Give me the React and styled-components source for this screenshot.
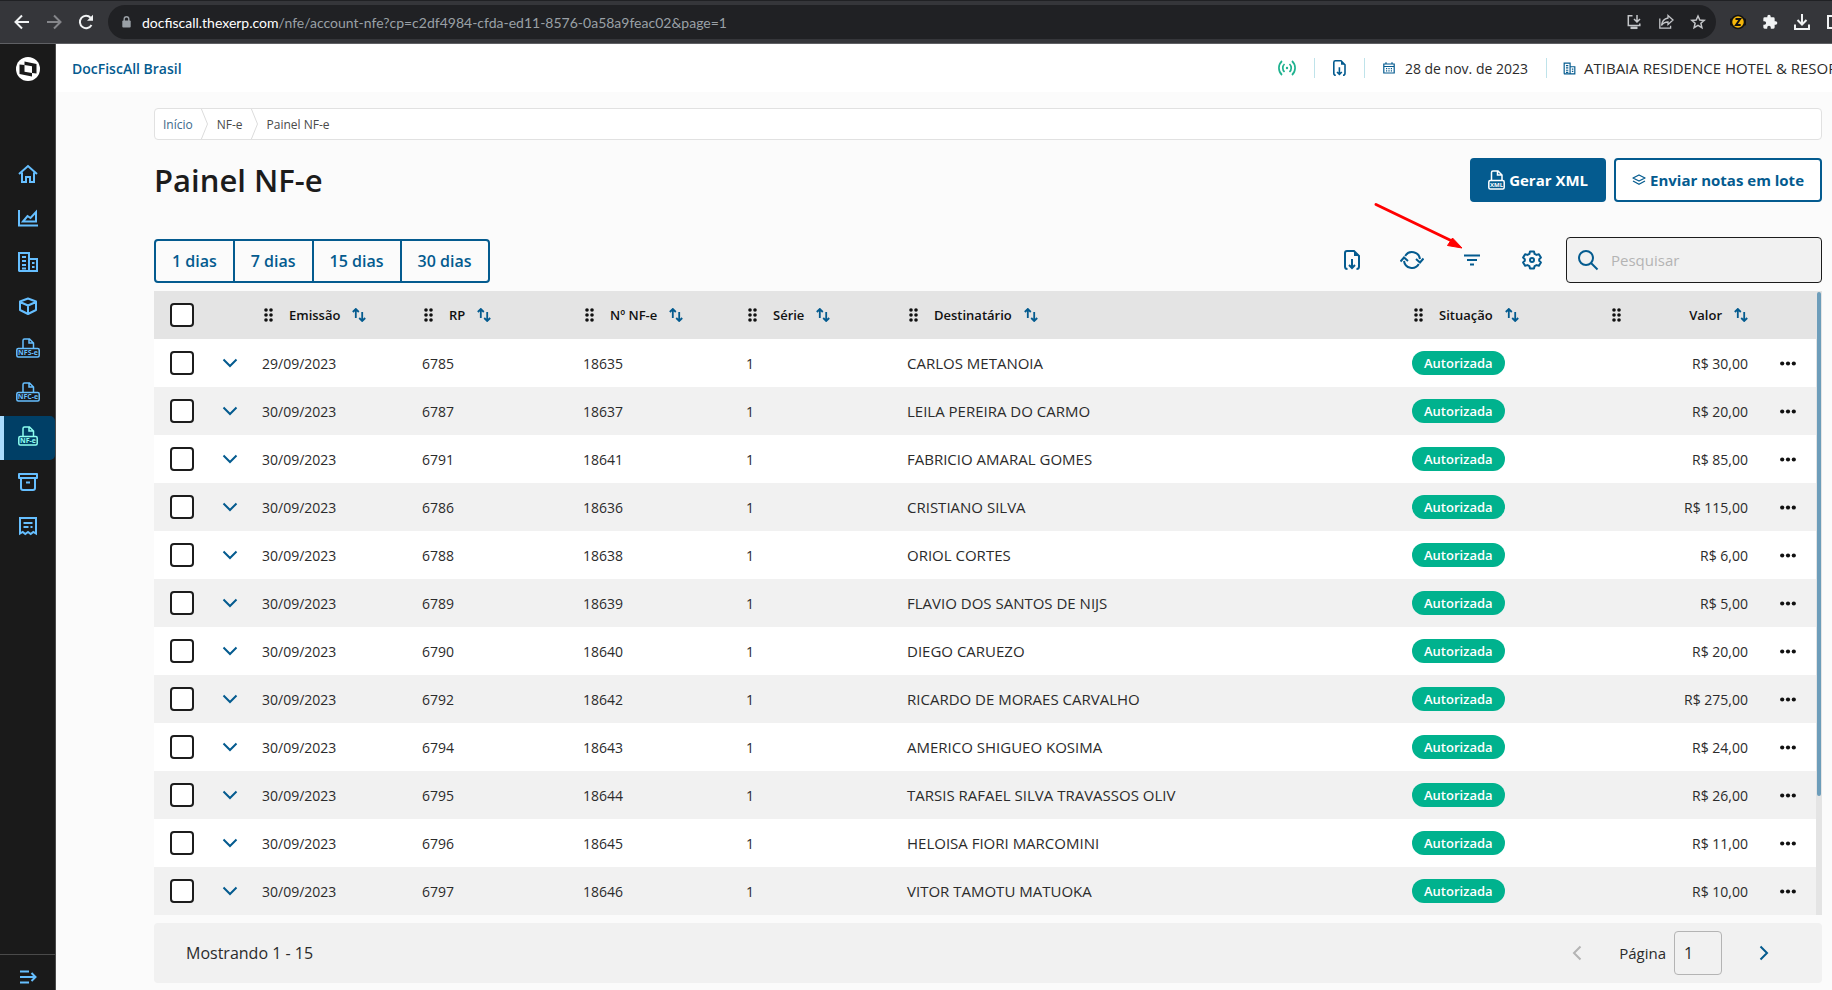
import React from "react";
import styled, { createGlobalStyle } from "styled-components";

const GlobalStyle = createGlobalStyle`
  * {
    box-sizing: border-box;
  }

  body {
    margin: 0;
    background: #fbfbfb;
    color: #2b2b2b;
    font-family: "Open Sans", "Noto Sans", sans-serif;
    font-size: 14px;
    overflow: hidden;
  }

  button, input {
    font: inherit;
    color: inherit;
  }

  a {
    color: inherit;
    text-decoration: none;
  }

  svg {
    display: block;
    flex: none;
  }
`;

/* ---------- icons ---------- */

const Icon = ({ size = 24, width, height, box = "0 0 24 24", stroke = 2, children }) => (
  <svg
    width={width || size}
    height={height || size}
    viewBox={box}
    fill="none"
    stroke="currentColor"
    strokeWidth={stroke}
    aria-hidden="true"
  >
    {children}
  </svg>
);

const BackIcon = () => (
  <Icon size={16} box="0 0 16 16">
    <path d="M15 8H2M8 1.5 1.5 8 8 14.5" />
  </Icon>
);

const ForwardIcon = () => (
  <Icon size={16} box="0 0 16 16">
    <path d="M1 8h13M8 1.5 14.5 8 8 14.5" />
  </Icon>
);

const ReloadIcon = () => (
  <Icon size={16} box="0 0 16 16">
    <path d="M13.5 11A6.2 6.2 0 1 1 12.6 3.7" />
    <path d="M15 .8v6H9z" fill="currentColor" stroke="none" />
  </Icon>
);

const LockIcon = () => (
  <Icon width={9} height={12} box="0 0 9 12" stroke={1.4}>
    <path d="M2.2 5V3a2.3 2.3 0 0 1 4.6 0v2" />
    <rect x="0.3" y="4.6" width="8.4" height="7" rx="1" fill="currentColor" stroke="none" />
  </Icon>
);

const InstallIcon = () => (
  <Icon size={16} box="0 0 16 16" stroke={1.5}>
    <path d="M6.5 1.8H2.3v9.6h11.5V9.5M11 1v6M8 5l3 3 3-3" />
    <path d="M4.500 13.800h7" strokeWidth="2.500" />
  </Icon>
);

const ShareIcon = () => (
  <Icon size={16} box="0 0 16 16" stroke={1.3}>
    <path d="M1.8 4.5v9.7h10.8v-2.5M10 1.5 15 6l-5 4.5V8C7 8 5 9 3.5 11.5 4 7 6.5 4.6 10 4z" />
  </Icon>
);

const StarIcon = () => (
  <Icon size={16} box="0 0 16 16" stroke={1.5}>
    <path d="m8 2 1.8 4 4.4.4-3.3 2.9 1 4.3L8 11.3l-3.9 2.3 1-4.3-3.3-2.9L6.2 6z" />
  </Icon>
);

const ZBadgeIcon = () => (
  <Icon size={16} box="0 0 16 16" stroke={2}>
    <rect x="0" y="4.5" width="16" height="7" rx="1" fill="#111" stroke="none" />
    <circle cx="8" cy="8" r="6.5" fill="#f5b70a" stroke="#111" strokeWidth="1.5" />
    <path d="M5.5 5h4.600L6 11h4.700" stroke="#111" />
  </Icon>
);

const PuzzleIcon = () => (
  <Icon size={16} box="0 0 24 24" stroke={0}>
    <path
      fill="currentColor"
      d="M20.5 11H19V7a2 2 0 0 0-2-2h-4V3.5a2.5 2.5 0 0 0-5 0V5H4a2 2 0 0 0-2 2v3.8h1.5a2.7 2.7 0 0 1 0 5.4H2V20a2 2 0 0 0 2 2h3.8v-1.5a2.7 2.7 0 0 1 5.4 0V22H17a2 2 0 0 0 2-2v-4h1.5a2.5 2.5 0 0 0 0-5z"
    />
  </Icon>
);

const DownloadIcon = () => (
  <Icon size={18} box="0 0 18 18">
    <path d="M9 1v9.5M4.500 7 9 11.500 13.500 7M2 11.500V16h14v-4.500" />
  </Icon>
);

const PanelIcon = () => (
  <Icon size={14} box="0 0 14 14">
    <rect x="1" y="1" width="12" height="12" />
  </Icon>
);

const Logo = () => (
  <svg width="24" height="24" viewBox="0 0 24 24" aria-hidden="true">
    <circle cx="12" cy="12" r="12" fill="#fff" />
    <path d="M3.500 7.500 8.500 8V4.500L20.500 7v9.500l-4.500-.500v3.500L3.500 17z" fill="#1a1a1a" />
    <path d="M8.500 8 16 9.300V16l-7.500-1.300z" fill="#fff" />
  </svg>
);

const HomeIcon = () => (
  <Icon size={20} box="0 0 20 20">
    <path d="M1 10 10 2l9 8M4 8.5V18h4v-5h4v5h4V8.5" />
  </Icon>
);

const ChartIcon = () => (
  <Icon size={22} box="0 0 22 22">
    <path d="M2 3v15.5h19" />
    <path d="M6 14.5 10.500 9l3 2L19 5v9.500z" />
  </Icon>
);

const BuildingIcon = ({ size = 22 }) => (
  <Icon size={size} box="0 0 22 22">
    <path d="M2 20V2h10v18M12 8h8v12H1.5M5 6h4M5 10h4M5 14h4M5 17.5h4M15 12h2.5M15 16h2.5" />
  </Icon>
);

const BoxIcon = () => (
  <Icon size={20} box="0 0 20 20">
    <path d="m10 2.5 8 3v8.5l-8 4-8-4V5.5zM2 6l8 3.5L18 6M10 9.5V18" strokeLinejoin="round" />
  </Icon>
);

// Sheet of paper coming out of a tag that carries the document type
const DocTagIcon = ({ label, width = 24, height = 24, fontSize = 7 }) => (
  <Icon width={width} height={height} box={`0 0 ${width} ${height}`} stroke={1.5}>
    <path d={`M${width / 2 - 5} 10V2.5q0-1.5 1.5-1.5h5l4 4v5M${width / 2 + 1} 1.5V5h4`} />
    <rect x="0.8" y="10.5" width={width - 1.6} height="8.5" rx="1.5" />
    <text
      x={width / 2}
      y="17.3"
      textAnchor="middle"
      fontFamily="Open Sans, sans-serif"
      fontSize={fontSize}
      fontWeight="700"
      fill="currentColor"
      stroke="none"
    >
      {label}
    </text>
  </Icon>
);

const ArchiveIcon = () => (
  <Icon size={20} box="0 0 20 20">
    <path d="M1 2h18v4H1zM3 6v10q0 2 2 2h10q2 0 2-2V6M8 10.5h4" strokeLinejoin="round" />
  </Icon>
);

const ReceiptIcon = () => (
  <Icon size={20} box="0 0 20 20">
    <path d="M2 17.5V2h16v15.5l-2.7-1.5-2.6 2-2.7-2-2.7 2-2.6-2zM5.5 7h9M5.5 11h5M12.5 11h2" />
  </Icon>
);

const ExpandIcon = () => (
  <Icon width={18} height={14} box="0 0 18 14">
    <path d="M1 1.5h9M1 7h15M1 12.5h9M12.5 3l4 4-4 4" />
  </Icon>
);

const SignalIcon = () => (
  <Icon size={18} box="0 0 18 18" stroke={1.7}>
    <path d="M4 2a9.5 9.5 0 0 0 0 14M6.5 5a5.5 5.5 0 0 0 0 8M14 2a9.5 9.5 0 0 1 0 14M11.5 5a5.5 5.5 0 0 1 0 8" />
    <circle cx="9" cy="9" r="1.2" fill="currentColor" stroke="none" />
  </Icon>
);

const FileDownIcon = ({ height = 20 }) => (
  <Icon width={(height * 16) / 20} height={height} box="0 0 16 20">
    <path d="M3.5 19Q1 19 1 16.5V3q0-2 2-2h7l5 5v10.5Q15 19 12.5 19" />
    <path d="M10 1v5h5z" fill="currentColor" stroke="none" />
    <path d="M8 9v9M5 15l3 3 3-3" />
  </Icon>
);

const CalendarIcon = () => (
  <Icon size={12} box="0 0 12 12" stroke={1.2}>
    <path d="M.8 2h10.4v9H.8zM.8 4.5h10.4M3 .3v2M9 .3v2" />
    <path d="M3 6.7h6M3 8.8h6" strokeDasharray="1.2 1.2" />
  </Icon>
);

const LayersIcon = () => (
  <Icon width={14} height={16} box="0 0 14 16" stroke={1.3}>
    <path d="m7 3 6 3-6 3-6-3zM1 9l6 3.3L13 9" strokeLinejoin="round" />
  </Icon>
);

const RefreshIcon = () => (
  <Icon size={24}>
    <path d="M4 13A8 8 0 0 0 18.800 16M20 11A8 8 0 0 0 5.200 8" />
    <path d="M.5 13.500 4 9.500l4 3.500M16 11l4 3.500 3.500-4" />
  </Icon>
);

const FilterIcon = () => (
  <Icon width={16} height={12} box="0 0 16 12">
    <path d="M0 1.5h16M3 6h10M6 10.5h4" />
  </Icon>
);

const GearIcon = () => (
  <Icon size={20} box="0 0 20 20">
    <path
      d="M8 1.5h4l.6 2.4 1.9 1 2.4-.7 2 3.4-1.7 1.7v1.4l1.7 1.7-2 3.4-2.4-.7-1.9 1-.6 2.4H8l-.6-2.4-1.9-1-2.4.7-2-3.4 1.7-1.7V9.3L1.1 7.6l2-3.4 2.4.7 1.9-1z"
      strokeLinejoin="round"
    />
    <circle cx="10" cy="10" r="2" />
  </Icon>
);

const SearchIcon = () => (
  <Icon size={22} box="0 0 22 22">
    <circle cx="9" cy="9" r="7" />
    <path d="m14 14 6.5 6.5" />
  </Icon>
);

const ChevronIcon = () => (
  <Icon width={16} height={10} box="0 0 16 10">
    <path d="m1.5 1.5 6.5 6.5 6.5-6.5" />
  </Icon>
);

const PrevIcon = () => (
  <Icon width={10} height={16} box="0 0 10 16">
    <path d="M8.5 1.5 2 8l6.5 6.5" />
  </Icon>
);

const NextIcon = () => (
  <Icon width={10} height={16} box="0 0 10 16">
    <path d="M1.5 1.5 8 8l-6.5 6.5" />
  </Icon>
);

const GripIcon = () => (
  <Icon width={9} height={14} box="0 0 9 14" stroke={0}>
    {[2, 7, 12].map((y) => (
      <g key={y} fill="#111">
        <circle cx="2" cy={y} r="1.8" />
        <circle cx="7" cy={y} r="1.8" />
      </g>
    ))}
  </Icon>
);

const SortIcon = () => (
  <Icon width={14} height={14} box="0 0 14 14" stroke={1.8}>
    <path d="M3.8 10V1.5M.8 4l3-3 3 3M10.2 4v8.5M7.2 10l3 3 3-3" />
  </Icon>
);

const MoreIcon = () => (
  <Icon width={16} height={5} box="0 0 16 5" stroke={0}>
    <g fill="#111">
      <circle cx="2.2" cy="2.5" r="2.1" />
      <circle cx="8" cy="2.5" r="2.1" />
      <circle cx="13.8" cy="2.5" r="2.1" />
    </g>
  </Icon>
);

/* ---------- data ---------- */

const navItems = [
  { name: "Início", icon: <HomeIcon /> },
  { name: "Gráficos", icon: <ChartIcon /> },
  { name: "Empresas", icon: <BuildingIcon /> },
  { name: "Produtos", icon: <BoxIcon /> },
  { name: "Painel NFS-e", icon: <DocTagIcon label="NFS-e" /> },
  { name: "Painel NFC-e", icon: <DocTagIcon label="NFC-e" /> },
  { name: "Painel NF-e", icon: <DocTagIcon label="NF-e" width={20} />, active: true },
  { name: "Arquivo", icon: <ArchiveIcon /> },
  { name: "Recibos", icon: <ReceiptIcon /> },
];

const periods = ["1 dias", "7 dias", "15 dias", "30 dias"];

const columns = [
  { label: "Emissão", width: 160 },
  { label: "RP", width: 161 },
  { label: "Nº NF-e", width: 163 },
  { label: "Série", width: 161 },
  { label: "Destinatário" },
  { label: "Situação", width: 198 },
  { label: "Valor", width: 154, right: true },
];

const invoices = [
  ["29/09/2023", "6785", "18635", "CARLOS METANOIA", "30,00"],
  ["30/09/2023", "6787", "18637", "LEILA PEREIRA DO CARMO", "20,00"],
  ["30/09/2023", "6791", "18641", "FABRICIO AMARAL GOMES", "85,00"],
  ["30/09/2023", "6786", "18636", "CRISTIANO SILVA", "115,00"],
  ["30/09/2023", "6788", "18638", "ORIOL CORTES", "6,00"],
  ["30/09/2023", "6789", "18639", "FLAVIO DOS SANTOS DE NIJS", "5,00"],
  ["30/09/2023", "6790", "18640", "DIEGO CARUEZO", "20,00"],
  ["30/09/2023", "6792", "18642", "RICARDO DE MORAES CARVALHO", "275,00"],
  ["30/09/2023", "6794", "18643", "AMERICO SHIGUEO KOSIMA", "24,00"],
  ["30/09/2023", "6795", "18644", "TARSIS RAFAEL SILVA TRAVASSOS OLIV", "26,00"],
  ["30/09/2023", "6796", "18645", "HELOISA FIORI MARCOMINI", "11,00"],
  ["30/09/2023", "6797", "18646", "VITOR TAMOTU MATUOKA", "10,00"],
];

/* ---------- page ---------- */

const App = () => (
  <Page>
    <GlobalStyle />
    <BrowserBar>
      <BrowserGroup>
        <BrowserButton aria-label="Voltar"><BackIcon /></BrowserButton>
        <BrowserButton aria-label="Avançar" $dim><ForwardIcon /></BrowserButton>
        <BrowserButton aria-label="Recarregar"><ReloadIcon /></BrowserButton>
      </BrowserGroup>
      <AddressBar>
        <LockIcon />
        <Address>
          <strong>docfiscall.thexerp.com</strong>
          /nfe/account-nfe?cp=c2df4984-cfda-ed11-8576-0a58a9feac02&amp;page=1
        </Address>
        <BrowserButton aria-label="Instalar" $soft><InstallIcon /></BrowserButton>
        <BrowserButton aria-label="Compartilhar" $soft><ShareIcon /></BrowserButton>
        <BrowserButton aria-label="Favoritar" $soft><StarIcon /></BrowserButton>
      </AddressBar>
      <BrowserExtras>
        <BrowserButton aria-label="Extensão Z"><ZBadgeIcon /></BrowserButton>
        <BrowserButton aria-label="Extensões"><PuzzleIcon /></BrowserButton>
        <BrowserButton aria-label="Downloads"><DownloadIcon /></BrowserButton>
        <BrowserButton aria-label="Painel lateral"><PanelIcon /></BrowserButton>
      </BrowserExtras>
    </BrowserBar>

    <Shell>
      <Sidebar>
        <LogoLink href="#inicio" aria-label="Página inicial"><Logo /></LogoLink>
        <Nav>
          {navItems.map((item) => (
            <NavLink key={item.name} href="#nav" aria-label={item.name} $active={item.active}>
              {item.icon}
            </NavLink>
          ))}
        </Nav>
        <ExpandButton aria-label="Expandir menu"><ExpandIcon /></ExpandButton>
      </Sidebar>

      <Body>
        <Header>
          <Brand href="#inicio">DocFiscAll Brasil</Brand>
          <HeaderItem $color="#1fb28f"><SignalIcon /></HeaderItem>
          <HeaderItem $divided><FileDownIcon height={16} /></HeaderItem>
          <HeaderItem $divided><CalendarIcon /><span>28 de nov. de 2023</span></HeaderItem>
          <Company><BuildingIcon size={13} /><span>ATIBAIA RESIDENCE HOTEL &amp; RESORT</span></Company>
        </Header>

        <Main>
          <Breadcrumb aria-label="Trilha">
            <Crumb href="#inicio" $first>Início</Crumb>
            <CrumbDivider />
            <Crumb href="#nfe">NF-e</Crumb>
            <CrumbDivider />
            <Crumb href="#painel">Painel NF-e</Crumb>
          </Breadcrumb>

          <TitleRow>
            <Title>Painel NF-e</Title>
            <ActionButton $primary>
              <DocTagIcon label="XML" width={17} height={20} fontSize={6} />
              Gerar XML
            </ActionButton>
            <ActionButton><LayersIcon />Enviar notas em lote</ActionButton>
          </TitleRow>

          <Toolbar>
            <Periods>
              {periods.map((period) => (
                <PeriodButton key={period}>{period}</PeriodButton>
              ))}
            </Periods>
            <ToolButton aria-label="Exportar"><FileDownIcon /></ToolButton>
            <ToolButton aria-label="Atualizar"><RefreshIcon /></ToolButton>
            <ToolButton aria-label="Filtrar">
              <FilterIcon />
              <Pointer viewBox="0 0 96 52" aria-hidden="true">
                <path d="M6 4.5 82 41" stroke="#f00" strokeWidth="3" strokeLinecap="round" />
                <path d="M92 48 77.5 45.5 82.5 38z" fill="#f00" stroke="#f00" />
              </Pointer>
            </ToolButton>
            <ToolButton aria-label="Configurar"><GearIcon /></ToolButton>
            <SearchBox>
              <SearchIcon />
              <SearchInput type="search" placeholder="Pesquisar" aria-label="Pesquisar" />
            </SearchBox>
          </Toolbar>

          <TableArea>
            <Table>
              <colgroup>
                <Col $width={60} />
                <Col $width={40} />
                {columns.map((col) => (
                  <Col key={col.label} $width={col.width} />
                ))}
                <Col $width={60} />
              </colgroup>
              <thead>
                <tr>
                  <CheckHead><Checkbox type="checkbox" aria-label="Selecionar todas" /></CheckHead>
                  <HeadCell />
                  {columns.map((col) => (
                    <HeadCell key={col.label}>
                      <HeadContent $right={col.right}>
                        <GripIcon />
                        <HeadLabel>{col.label}<SortIcon /></HeadLabel>
                      </HeadContent>
                    </HeadCell>
                  ))}
                  <HeadCell />
                </tr>
              </thead>
              <tbody>
                {invoices.map(([date, rp, number, name, value]) => (
                  <Row key={number}>
                    <CheckCell><Checkbox type="checkbox" aria-label={`Selecionar ${number}`} /></CheckCell>
                    <Cell><RowButton aria-label="Expandir"><ChevronIcon /></RowButton></Cell>
                    <Cell>{date}</Cell>
                    <Cell>{rp}</Cell>
                    <Cell>{number}</Cell>
                    <Cell>1</Cell>
                    <NameCell>{name}</NameCell>
                    <Cell><Badge>Autorizada</Badge></Cell>
                    <Cell $right>R$ {value}</Cell>
                    <MoreCell><RowButton aria-label="Mais opções"><MoreIcon /></RowButton></MoreCell>
                  </Row>
                ))}
              </tbody>
            </Table>
            <ScrollTrack><ScrollThumb /></ScrollTrack>
          </TableArea>

          <Pagination>
            <Summary>Mostrando 1 - 15</Summary>
            <PageButton aria-label="Página anterior" disabled><PrevIcon /></PageButton>
            <PageLabel>
              Página
              <PageInput type="text" defaultValue="1" />
            </PageLabel>
            <PageButton aria-label="Próxima página"><NextIcon /></PageButton>
          </Pagination>
        </Main>
      </Body>
    </Shell>
  </Page>
);

export default App;

/* ---------- styles ---------- */

const blue = "#045b8f";

const Page = styled.div`
  display: flex;
  flex-direction: column;
  height: 100vh;
`;

const BrowserBar = styled.div`
  display: flex;
  align-items: center;
  gap: 6px;
  height: 44px;
  flex: none;
  padding-left: 6px;
  background: #35363a;
  border-top: 1px solid #202124;
  border-bottom: 1px solid #5f6064;
`;

const BrowserGroup = styled.div`
  display: flex;
`;

const BrowserButton = styled.button`
  display: flex;
  align-items: center;
  justify-content: center;
  flex: none;
  width: 32px;
  height: 32px;
  padding: 0;
  border: 0;
  background: none;
  color: ${(props) => (props.$dim ? "#85868a" : props.$soft ? "#c4c6c9" : "#f1f3f4")};
`;

const AddressBar = styled.div`
  display: flex;
  align-items: center;
  flex: 1;
  min-width: 0;
  height: 34px;
  padding: 0 2px 0 14px;
  border-radius: 17px;
  background: #202124;
  color: #9aa0a6;
`;

const Address = styled.div`
  flex: 1;
  min-width: 0;
  padding-left: 11px;
  overflow: hidden;
  white-space: nowrap;
  font-family: Lato, sans-serif;
  color: #9aa0a6;

  strong {
    font-weight: 400;
    color: #fff;
  }
`;

const BrowserExtras = styled.div`
  display: flex;
  flex: none;
  width: 110px;
  overflow: hidden;
`;

const Shell = styled.div`
  display: flex;
  flex: 1;
  min-height: 0;
`;

const Sidebar = styled.aside`
  display: flex;
  flex-direction: column;
  flex: none;
  width: 56px;
  background: #1a1a1a;
  border-right: 1px solid #4a4a4a;
  color: #66bfff;
`;

const LogoLink = styled.a`
  display: flex;
  justify-content: center;
  padding: 13px 0 0;
  height: 108px;
`;

const Nav = styled.nav`
  flex: 1;
`;

const NavLink = styled.a`
  display: flex;
  align-items: center;
  justify-content: center;
  height: 44px;
  ${(props) => props.$active && `
    background: #003f66;
    border-left: 4px solid #a9dcff;
    border-radius: 0 5px 5px 0;
    padding-right: 4px;
    color: #8dfff0;
  `}
`;

const ExpandButton = styled.button`
  display: flex;
  justify-content: center;
  height: 36px;
  padding: 15px 0 0;
  border: 0;
  border-top: 1px solid #4a4a4a;
  background: none;
`;

const Body = styled.div`
  display: flex;
  flex-direction: column;
  flex: 1;
  min-width: 0;
`;

const Header = styled.header`
  display: flex;
  align-items: center;
  flex: none;
  height: 48px;
  padding-left: 16px;
  background: #fff;
  white-space: nowrap;
`;

const Brand = styled.a`
  margin-right: auto;
  font-weight: 600;
  color: ${blue};
`;

const HeaderItem = styled.div`
  display: flex;
  align-items: center;
  justify-content: center;
  gap: 10px;
  height: 20px;
  padding: 0 18px;
  color: ${(props) => props.$color || blue};
  border-left: ${(props) => (props.$divided ? "1px solid #bfe3ea" : "0")};

  span {
    color: #2b2b2b;
  }
`;

const Company = styled(HeaderItem)`
  justify-content: flex-start;
  gap: 8px;
  width: 286px;
  padding: 0 0 0 16px;
  border-left: 1px solid #bfe3ea;
  overflow: hidden;
  font-size: 15px;
`;

const Main = styled.main`
  display: flex;
  flex-direction: column;
  flex: 1;
  min-height: 0;
  padding: 16px 10px 7px 98px;
`;

const Breadcrumb = styled.nav`
  display: flex;
  align-items: center;
  gap: 8px;
  flex: none;
  height: 32px;
  padding-left: 8px;
  border: 1px solid #e1e1e1;
  border-radius: 4px;
  background: #fff;
  overflow: hidden;
`;

const Crumb = styled.a`
  font-size: 12px;
  color: ${(props) => (props.$first ? "#3d6a8a" : "#4a4a4a")};
`;

const CrumbDivider = () => (
  <Icon width={8} height={32} box="0 0 8 32" stroke={1}>
    <path d="M0 0l6.5 16L0 32" stroke="#dcdcdc" />
  </Icon>
);

const TitleRow = styled.div`
  display: flex;
  align-items: center;
  gap: 8px;
  flex: none;
  height: 44px;
  margin-top: 18px;
`;

const Title = styled.h1`
  margin: 0 auto 0 0;
  font-size: 31px;
  font-weight: 600;
  color: #1c1c1c;
`;

const ActionButton = styled.button`
  display: flex;
  align-items: center;
  gap: 4px;
  height: 44px;
  padding: 0 16px;
  border: 2px solid ${blue};
  border-radius: 4px;
  background: ${(props) => (props.$primary ? blue : "#fff")};
  color: ${(props) => (props.$primary ? "#fff" : blue)};
  font-size: 15px;
  font-weight: 700;
`;

const Toolbar = styled.div`
  display: flex;
  align-items: center;
  flex: none;
  height: 46px;
  margin: 35px 0 8px;
`;

const Periods = styled.div`
  display: flex;
  align-self: flex-end;
  margin-right: auto;
  border: 2px solid ${blue};
  border-radius: 4px;
`;

const PeriodButton = styled.button`
  height: 40px;
  padding: 0 16px;
  border: 0;
  background: none;
  color: ${blue};
  font-size: 16px;
  font-weight: 600;

  & + & {
    border-left: 2px solid ${blue};
  }
`;

const ToolButton = styled.button`
  position: relative;
  display: flex;
  align-items: center;
  justify-content: center;
  width: 60px;
  height: 44px;
  padding: 0;
  border: 0;
  background: none;
  color: ${blue};
`;

const Pointer = styled.svg`
  position: absolute;
  top: -38px;
  left: -72px;
  width: 96px;
  height: 52px;
  pointer-events: none;
`;

const SearchBox = styled.div`
  display: flex;
  align-items: center;
  width: 256px;
  height: 46px;
  margin-left: 4px;
  padding-left: 10px;
  border: 1px solid #1c1c1c;
  border-radius: 4px;
  background: #f1f1f1;
  color: ${blue};
`;

const SearchInput = styled.input`
  flex: 1;
  min-width: 0;
  height: 40px;
  padding: 0 12px;
  border: 0;
  outline: 0;
  background: none;
  font-size: 15px;

  &::placeholder {
    color: #b4b4b4;
  }
`;

const TableArea = styled.div`
  display: flex;
  align-items: stretch;
  flex: 1;
  min-height: 0;
  overflow: hidden;
`;

const Table = styled.table`
  flex: 1;
  align-self: flex-start;
  width: 100%;
  table-layout: fixed;
  border-collapse: collapse;
`;

const Col = styled.col`
  width: ${(props) => (props.$width ? `${props.$width}px` : "auto")};
`;

const HeadCell = styled.th`
  height: 48px;
  padding: 0 8px 0 10px;
  background: #e4e4e4;
  text-align: left;
`;

const CheckHead = styled(HeadCell)`
  padding: 0 0 0 16px;
`;

const HeadContent = styled.div`
  display: flex;
  align-items: center;
  gap: 16px;
  justify-content: ${(props) => (props.$right ? "space-between" : "flex-start")};
`;

const HeadLabel = styled.span`
  display: flex;
  align-items: center;
  gap: 12px;
  font-size: 13px;
  font-weight: 600;
  color: #111;

  svg {
    color: ${blue};
  }
`;

const Row = styled.tr`
  background: #fff;

  &:nth-child(even) {
    background: #f1f1f1;
  }
`;

const Cell = styled.td`
  height: 48px;
  padding: 0 8px;
  white-space: nowrap;
  text-align: ${(props) => (props.$right ? "right" : "left")};
`;

const CheckCell = styled(Cell)`
  padding: 0 0 0 16px;
`;

const NameCell = styled(Cell)`
  font-size: 15px;
`;

const MoreCell = styled(Cell)`
  padding-left: 24px;
`;

const Checkbox = styled.input`
  appearance: none;
  display: block;
  width: 24px;
  height: 24px;
  margin: 0;
  border: 2px solid #1c1c1c;
  border-radius: 4px;
  background: #fff;
`;

const RowButton = styled.button`
  display: flex;
  align-items: center;
  height: 24px;
  padding: 0;
  border: 0;
  background: none;
  color: ${blue};
`;

const Badge = styled.span`
  display: inline-block;
  padding: 0 12px;
  border-radius: 12px;
  background: #00b28e;
  color: #fff;
  font-size: 13px;
  font-weight: 600;
  line-height: 24px;
`;

const ScrollTrack = styled.div`
  flex: none;
  width: 6px;
  padding: 1px;
  background: #e4e4e4;
`;

const ScrollThumb = styled.div`
  height: 81%;
  border-radius: 2px;
  background: #6d9dba;
`;

const Pagination = styled.footer`
  display: flex;
  align-items: center;
  flex: none;
  height: 60px;
  margin-top: 8px;
  padding: 0 36px 0 32px;
  border-radius: 4px;
  background: #f1f1f1;
  font-size: 16px;
`;

const Summary = styled.span`
  margin-right: auto;
`;

const PageButton = styled.button`
  display: flex;
  align-items: center;
  justify-content: center;
  width: 44px;
  height: 44px;
  padding: 0;
  border: 0;
  background: none;
  color: ${(props) => (props.disabled ? "#b4b4b4" : blue)};
`;

const PageLabel = styled.label`
  display: flex;
  align-items: center;
  gap: 8px;
  margin: 0 20px;
  font-size: 15px;
`;

const PageInput = styled.input`
  width: 48px;
  height: 44px;
  padding: 0 9px;
  border: 1px solid #b4b4b4;
  border-radius: 4px;
  background: none;
  font-size: 16px;
`;
